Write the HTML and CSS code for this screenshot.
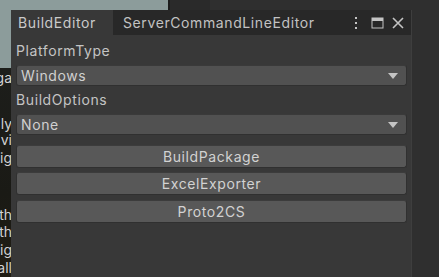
FILE: index.html
```html
<!DOCTYPE html>
<html>
<head>
<meta charset="utf-8">
<link rel="stylesheet" href="styles.css">
</head>
<body>
<div class="desk">
  <div class="bg-teal"></div>
  <div class="bg-seam"></div>
  <div class="bg-dark1"></div>
  <div class="bg-scene">
    <span class="frag f1">ga</span>
    <span class="frag f2">ly</span>
    <span class="frag f3">vi</span>
    <span class="frag f4">ig</span>
    <span class="frag f5">th</span>
    <span class="frag f6">th</span>
    <span class="frag f7">ig</span>
    <span class="frag f8">all</span>
  </div>

  <div class="window">
    <div class="tabbar">
      <div class="tab active">BuildEditor</div>
      <div class="tab">ServerCommandLineEditor</div>
      <div class="tools">
        <svg class="ico dots" width="4" height="14" viewBox="0 0 4 14"><rect x="1" y="1" width="2" height="2" fill="#c4c4c4"/><rect x="1" y="6" width="2" height="2" fill="#c4c4c4"/><rect x="1" y="11" width="2" height="2" fill="#c4c4c4"/></svg>
        <svg class="ico" width="13" height="12" viewBox="0 0 13 12"><rect x="1" y="1" width="11" height="10" fill="none" stroke="#c4c4c4" stroke-width="1"/><rect x="1" y="1" width="11" height="3" fill="#c4c4c4"/></svg>
        <svg class="ico" width="12" height="12" viewBox="0 0 12 12"><path d="M1 1 L11 11 M11 1 L1 11" stroke="#c4c4c4" stroke-width="1.6"/></svg>
      </div>
    </div>
    <div class="content">
      <div class="label">PlatformType</div>
      <div class="dropdown"><span>Windows</span><i class="arrow"></i></div>
      <div class="label">BuildOptions</div>
      <div class="dropdown"><span>None</span><i class="arrow"></i></div>
      <div class="buttons">
        <div class="btn">BuildPackage</div>
        <div class="btn">ExcelExporter</div>
        <div class="btn b3">Proto2CS</div>
      </div>
    </div>
  </div>
</div>
</body>
</html>
```
FILE: styles.css
```css
* { box-sizing: border-box; }
html, body { margin: 0; padding: 0; }
body {
  width: 439px; height: 277px; overflow: hidden;
  background: #2f2f2f;
  font-family: Inter, "Noto Sans", sans-serif;
  font-size: 14px;
  letter-spacing: 0.6px;
  color: #c8c8c8;
}
.desk { position: relative; width: 439px; height: 277px; overflow: hidden; }
.bg-teal { position: absolute; left: 0; top: 0; width: 168px; height: 68px; background: #8c9c9b; }
.bg-seam { position: absolute; left: 168px; top: 0; width: 2px; height: 10px; background: #1c1c1c; }
.bg-dark1 { position: absolute; left: 170px; top: 0; width: 40px; height: 10px; background: #2a2a2a; }
.bg-scene {
  position: absolute; left: 0; top: 68px; width: 11px; height: 209px;
  background: linear-gradient(#1d1e1b, #1a1a15 60%, #201d14);
  overflow: hidden;
}
.frag {
  position: absolute; right: -1px; font-size: 14px; line-height: 16px;
  letter-spacing: 0; color: #d2d2d2; white-space: nowrap;
}
.f1 { top: 2px; }
.f2 { top: 48px; }
.f3 { top: 64px; }
.f4 { top: 82px; }
.f5 { top: 139px; }
.f6 { top: 156px; }
.f7 { top: 174px; }
.f8 { top: 192px; }

.window {
  position: absolute; left: 11px; top: 10px; width: 401px; height: 267px;
  background: #383838;
  border-right: 1px solid #3e3e3e;
  display: flex; flex-direction: column;
}
.tabbar {
  height: 25px; background: #282828;
  display: flex; align-items: stretch;
}
.tab {
  display: flex; align-items: center;
  padding: 0 10px 0 10px; color: #c2c2c2; white-space: nowrap;
}
.tab.active { background: #383838; width: 102px; color: #cacaca; padding-left: 7px; }
.tools {
  margin-left: auto; display: flex; align-items: center; gap: 8px;
  padding-right: 7px;
}
.ico { display: block; }
.dots { margin-right: 5px; }
.content {
  padding: 6px 4px 0 5px;
  display: flex; flex-direction: column;
}
.label { height: 20px; line-height: 20px; margin-bottom: 4px; color: #c4c4c4; }
.dropdown {
  height: 21px; background: #515151;
  border: 1px solid #303030; border-top-color: #3a3a3a;
  border-radius: 3px;
  display: flex; align-items: center; justify-content: space-between;
  padding: 0 8px 0 4px; margin-bottom: 4px; color: #d0d0d0;
}
.arrow {
  width: 0; height: 0;
  border-left: 5px solid transparent; border-right: 5px solid transparent;
  border-top: 6px solid #c4c4c4;
}
.buttons { display: flex; flex-direction: column; gap: 4px; margin-top: 6px; }
.btn {
  height: 23px; background: #585858;
  border: 1px solid #303030; border-top-color: #3c3c3c;
  border-radius: 3px;
  display: flex; align-items: center; justify-content: center;
  color: #d2d2d2;
}
.b3 { margin-top: 1px; }
```
